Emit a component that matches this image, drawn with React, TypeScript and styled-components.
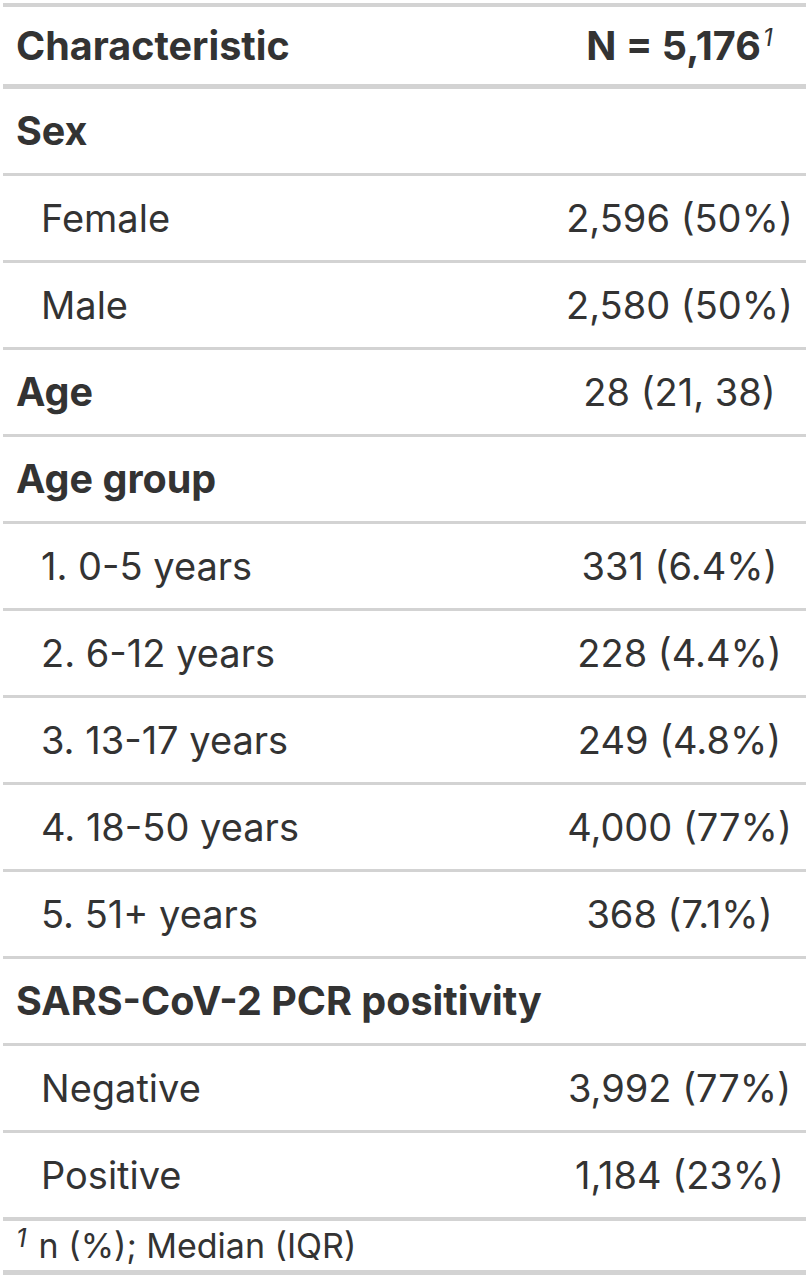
import React from 'react';
import styled, { createGlobalStyle } from 'styled-components';

const GlobalStyle = createGlobalStyle`
  html, body {
    margin: 0;
    padding: 0;
    background: #ffffff;
  }
  body {
    font-family: Inter, "Liberation Sans", Arial, sans-serif;
    color: #333333;
  }
`;

type Row = { label: string; value?: string; level: 'head' | 'sub' };

const rows: Row[] = [
  { label: 'Sex', level: 'head' },
  { label: 'Female', value: '2,596 (50%)', level: 'sub' },
  { label: 'Male', value: '2,580 (50%)', level: 'sub' },
  { label: 'Age', value: '28 (21, 38)', level: 'head' },
  { label: 'Age group', level: 'head' },
  { label: '1. 0-5 years', value: '331 (6.4%)', level: 'sub' },
  { label: '2. 6-12 years', value: '228 (4.4%)', level: 'sub' },
  { label: '3. 13-17 years', value: '249 (4.8%)', level: 'sub' },
  { label: '4. 18-50 years', value: '4,000 (77%)', level: 'sub' },
  { label: '5. 51+ years', value: '368 (7.1%)', level: 'sub' },
  { label: 'SARS-CoV-2 PCR positivity', level: 'head' },
  { label: 'Negative', value: '3,992 (77%)', level: 'sub' },
  { label: 'Positive', value: '1,184 (23%)', level: 'sub' },
];

const Page = styled.div`
  padding: 3px 4px 0 3px;
`;

const Table = styled.table`
  width: 100%;
  border-collapse: collapse;
  font-size: 38px;
  border-top: 4px solid #d3d3d3;
  border-bottom: 5px solid #d3d3d3;
`;

const HeadCell = styled.th<{ $align: 'left' | 'center' }>`
  height: 77px;
  padding: ${(p) => (p.$align === 'left' ? '0 13px' : '0 9px 0 7px')};
  font-size: 39.5px;
  font-weight: 700;
  text-align: ${(p) => p.$align};
  vertical-align: middle;
  border-bottom: 5px solid #d3d3d3;
`;

const BodyRow = styled.tr<{ $last: boolean }>`
  border-bottom: ${(p) => (p.$last ? '4px' : '3px')} solid #d3d3d3;
`;

const LabelCell = styled.td<{ $level: 'head' | 'sub' }>`
  height: 84px;
  padding: 0 13px 0 ${(p) => (p.$level === 'sub' ? '38px' : '13px')};
  font-size: ${(p) => (p.$level === 'head' ? '39.5px' : '38px')};
  font-weight: ${(p) => (p.$level === 'head' ? 700 : 400)};
  vertical-align: middle;
  white-space: nowrap;
`;

const ValueCell = styled.td`
  width: 254px;
  padding: 0 9px 0 7px;
  text-align: center;
  vertical-align: middle;
  white-space: nowrap;
`;

const Mark = styled.sup`
  font-size: 24px;
  font-style: italic;
  font-weight: 400;
  line-height: 0;
  vertical-align: 14px;
  margin-left: 2px;
`;

const FootCell = styled.td`
  height: 49px;
  padding: 0 13px;
  font-size: 34px;
  vertical-align: middle;
`;

const FootMark = styled.sup`
  font-size: 26px;
  font-style: italic;
  line-height: 0;
  vertical-align: 11px;
  margin-right: 12px;
`;

export default function App() {
  return (
    <Page>
      <GlobalStyle />
      <Table>
        <thead>
          <tr>
            <HeadCell $align="left">Characteristic</HeadCell>
            <HeadCell $align="center">
              N = 5,176<Mark>1</Mark>
            </HeadCell>
          </tr>
        </thead>
        <tbody>
          {rows.map((r, i) => (
            <BodyRow key={r.label} $last={i === rows.length - 1}>
              <LabelCell $level={r.level}>{r.label}</LabelCell>
              <ValueCell>{r.value ?? ''}</ValueCell>
            </BodyRow>
          ))}
        </tbody>
        <tfoot>
          <tr>
            <FootCell colSpan={2}>
              <FootMark>1</FootMark>n (%); Median (IQR)
            </FootCell>
          </tr>
        </tfoot>
      </Table>
    </Page>
  );
}
